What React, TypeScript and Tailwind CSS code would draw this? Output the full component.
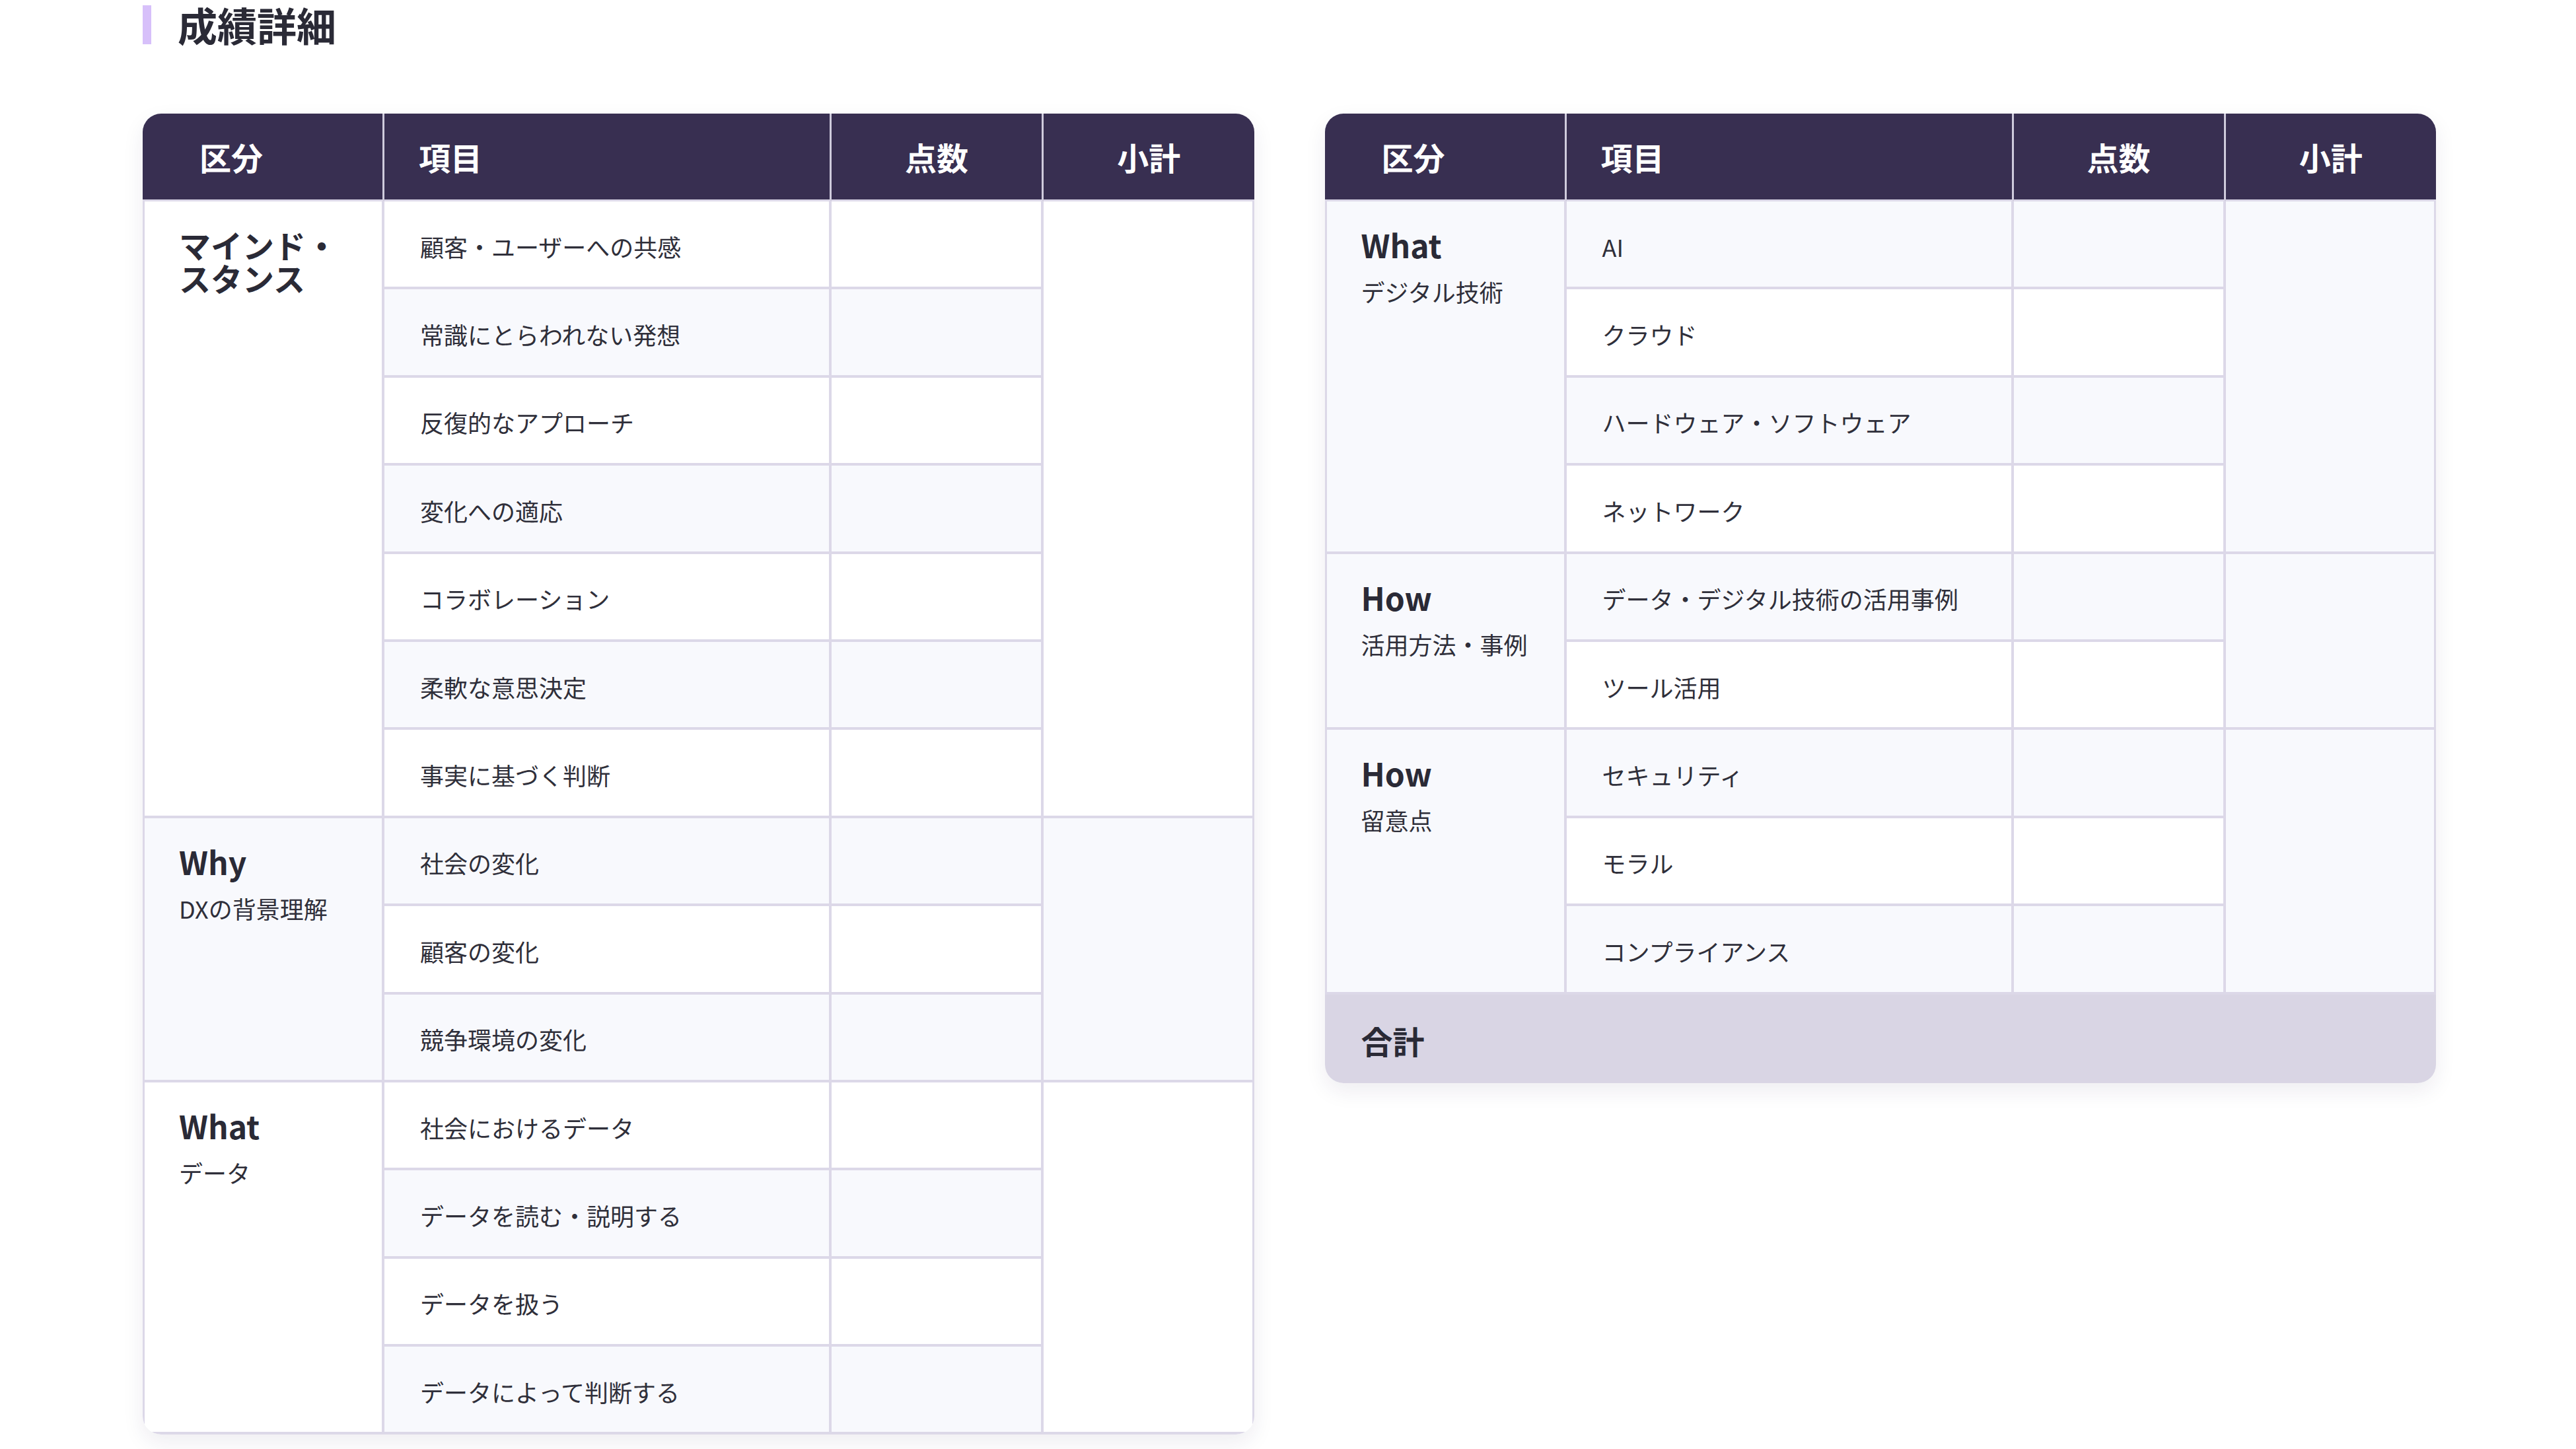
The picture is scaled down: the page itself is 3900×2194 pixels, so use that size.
type Group = {
  title: string;
  sub?: string;
  items: string[];
};

const leftGroups: Group[] = [
  {
    title: "マインド・スタンス",
    items: [
      "顧客・ユーザーへの共感",
      "常識にとらわれない発想",
      "反復的なアプローチ",
      "変化への適応",
      "コラボレーション",
      "柔軟な意思決定",
      "事実に基づく判断",
    ],
  },
  {
    title: "Why",
    sub: "DXの背景理解",
    items: ["社会の変化", "顧客の変化", "競争環境の変化"],
  },
  {
    title: "What",
    sub: "データ",
    items: [
      "社会におけるデータ",
      "データを読む・説明する",
      "データを扱う",
      "データによって判断する",
    ],
  },
];

const rightGroups: Group[] = [
  {
    title: "What",
    sub: "デジタル技術",
    items: ["AI", "クラウド", "ハードウェア・ソフトウェア", "ネットワーク"],
  },
  {
    title: "How",
    sub: "活用方法・事例",
    items: ["データ・デジタル技術の活用事例", "ツール活用"],
  },
  {
    title: "How",
    sub: "留意点",
    items: ["セキュリティ", "モラル", "コンプライアンス"],
  },
];

function ScoreTable({
  groups,
  oddLight,
  showTotal,
}: {
  groups: Group[];
  oddLight?: boolean;
  showTotal?: boolean;
}) {
  let idx = 0;
  return (
    <div className="flex-1 overflow-hidden rounded-[28px] bg-white shadow-[0_12px_32px_rgba(40,30,80,0.08)]">
      <table className="w-full table-fixed border-separate border-spacing-0">
        <colgroup>
          <col className="w-[366px]" />
          <col className="w-[677px]" />
          <col className="w-[321px]" />
          <col />
        </colgroup>
        <thead>
          <tr className="h-[133px] bg-[#382f51] text-[48px] text-white">
            <th className="border-r-[3px] border-b-[3px] border-r-[#cfcbdc] border-b-[#dcd8e8] pl-[86px] text-left font-bold">
              区分
            </th>
            <th className="border-r-[3px] border-b-[3px] border-r-[#cfcbdc] border-b-[#dcd8e8] pl-[52px] text-left font-bold">
              項目
            </th>
            <th className="border-r-[3px] border-b-[3px] border-r-[#cfcbdc] border-b-[#dcd8e8] text-center font-bold">
              点数
            </th>
            <th className="border-b-[3px] border-b-[#dcd8e8] text-center font-bold">
              小計
            </th>
          </tr>
        </thead>
        <tbody>
          {groups.map((g, gi) =>
            g.items.map((item, i) => {
              const n = idx++;
              const light = oddLight ? n % 2 === 0 : n % 2 === 1;
              const bg = light ? "bg-[#f8f9fd]" : "bg-white";
              return (
                <tr key={`${gi}-${i}`} className="h-[133.4px]">
                  {i === 0 && (
                    <td
                      rowSpan={g.items.length}
                      className={`${bg} border-b-4 border-l-[3px] border-r-4 border-[#dcd8e8] pt-[40px] pl-[52px] pr-[28px] align-top`}
                    >
                      <div className="text-[48px] leading-[50px] font-bold text-[#2a2a36]">
                        {g.title}
                      </div>
                      {g.sub && (
                        <div className="mt-[22px] text-[36px] leading-[48px] whitespace-nowrap text-[#2f2f3a]">
                          {g.sub}
                        </div>
                      )}
                    </td>
                  )}
                  <td
                    className={`${bg} border-b-4 border-r-4 border-[#dcd8e8] pt-[6px] pl-[54px] text-[36px] text-[#2f2f3a]`}
                  >
                    {item}
                  </td>
                  <td className={`${bg} border-b-4 border-r-4 border-[#dcd8e8]`} />
                  {i === 0 && (
                    <td
                      rowSpan={g.items.length}
                      className={`${bg} border-b-4 border-r-[3px] border-[#dcd8e8]`}
                    />
                  )}
                </tr>
              );
            })
          )}
          {showTotal && (
            <tr className="h-[134px]">
              <td
                colSpan={4}
                className="bg-[#d9d5e4] pt-[4px] pl-[55px] text-[48px] font-bold text-[#2a2a36]"
              >
                合計
              </td>
            </tr>
          )}
        </tbody>
      </table>
    </div>
  );
}

export default function App() {
  return (
    <div className="min-h-screen bg-white font-['Noto_Sans_CJK_JP','Noto_Sans',sans-serif]">
      <div className="ml-[216px] w-[3472px] pt-[7px]">
        <div className="flex items-center gap-[40px]">
          <div className="h-[59px] w-[13px] bg-[#d7c0fa]" />
          <h2 className="text-[60px] leading-[60px] font-bold text-[#2a2a36]">
            成績詳細
          </h2>
        </div>
        <div className="mt-[105px] flex items-start gap-[107px]">
          <ScoreTable groups={leftGroups} />
          <ScoreTable groups={rightGroups} oddLight showTotal />
        </div>
      </div>
    </div>
  );
}
